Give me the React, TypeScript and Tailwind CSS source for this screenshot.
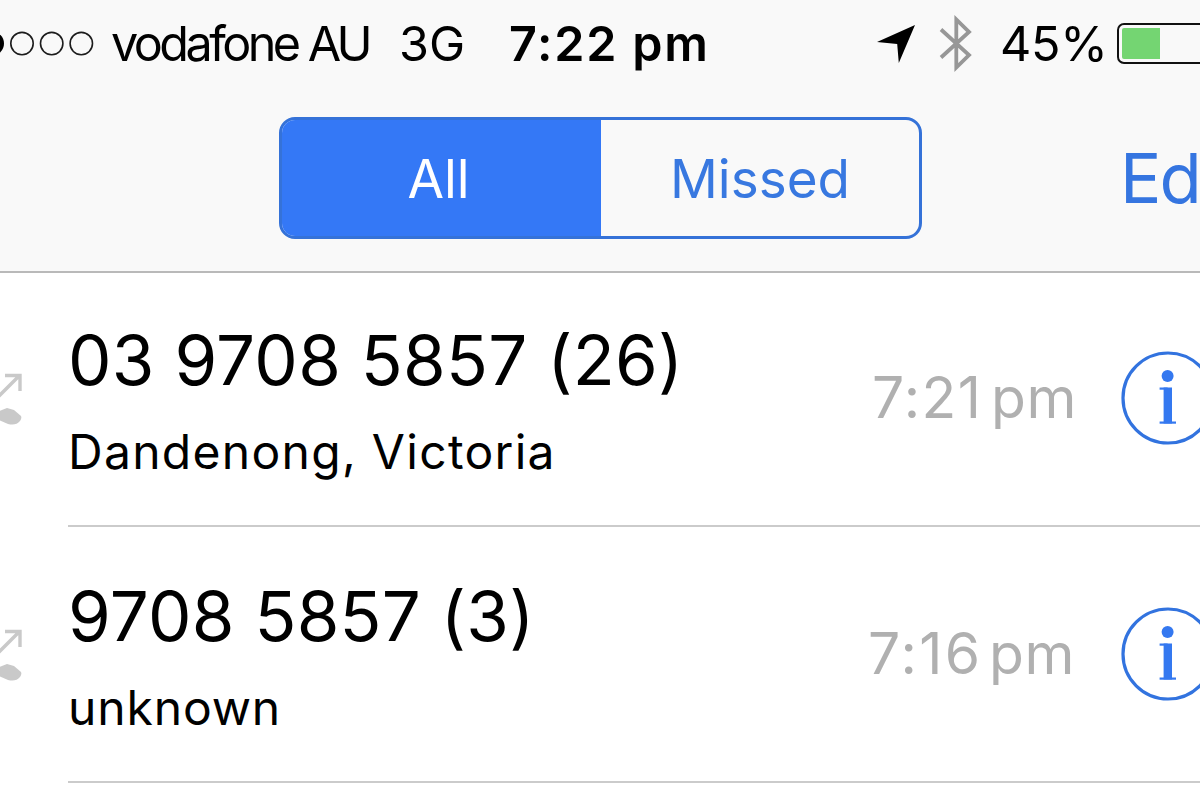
const calls = [
  {
    number: "03 9708 5857 (26)",
    place: "Dandenong, Victoria",
    time: "7:21",
    height: "h-[254px]",
    placeStyle: "tracking-[0.027em]",
    timeStyle: "ml-[4px] w-[119px] tracking-[0.025em]",
  },
  {
    number: "9708 5857 (3)",
    place: "unknown",
    time: "7:16",
    height: "h-[256px]",
    placeStyle: "tracking-[0.018em]",
    timeStyle: "w-[121px] tracking-[0.04em]",
  },
];

const SignalDots = () => (
  <svg width="94" height="26" viewBox="0 0 94 26" className="shrink-0">
    <circle cx="-8" cy="12.6" r="12" fill="#000" />
    {[22, 51.7, 81.3].map((cx) => (
      <circle key={cx} cx={cx} cy="12.6" r="11.2" fill="none" stroke="#1c1c1c" strokeWidth="1.6" />
    ))}
  </svg>
);

const LocationArrow = () => (
  <svg width="38" height="38" viewBox="0 0 38 38" className="shrink-0">
    <path d="M0 17 L38 0 L21.8 38 L20.2 19 Z" fill="#000" />
  </svg>
);

const BluetoothIcon = () => (
  <svg width="34" height="58" viewBox="0 0 34 58" className="shrink-0">
    <path
      d="M2 14.5 L30 40 L17.3 52.5 V4.5 L30 17 L2 42.5"
      fill="none"
      stroke="#979797"
      strokeWidth="3.8"
    />
  </svg>
);

const OutgoingCallIcon = () => (
  <svg width="24" height="56" viewBox="0 0 24 56" className="shrink-0">
    <path d="M-2 27 L19 6 M5 5.5 H20 V21" fill="none" stroke="#c9c9c9" strokeWidth="3.4" />
    <path d="M-1 41 L7 38 L14 40 L21 46 Q22 48 20 51 Q16 56 8 54 L-1 50 Z" fill="#c9c9c9" />
  </svg>
);

const InfoIcon = () => (
  <svg width="94" height="94" viewBox="0 0 94 94" className="shrink-0">
    <circle cx="47" cy="47" r="45" fill="none" stroke="#3273df" strokeWidth="3.2" />
    <circle cx="46.6" cy="25" r="6" fill="#3478f0" />
    <rect x="42.6" y="36.5" width="8.4" height="36" fill="#3478f0" />
    <rect x="38.6" y="36.5" width="8" height="2.2" fill="#3478f0" />
    <rect x="38.6" y="70.5" width="16.4" height="2.2" fill="#3478f0" />
  </svg>
);

const App = () => {
  return (
    <div className="w-[1200px] h-[800px] overflow-hidden bg-white text-black font-['Inter',sans-serif] whitespace-nowrap">
      <header className="h-[273px] bg-[#f9f9f9] border-b-2 border-[#b9b9b9]">
        {/* Status bar */}
        <div className="flex items-center h-[87px] text-[48.5px] leading-[87px]">
          <SignalDots />
          <span className="shrink-0 w-[287px] pl-[17px] tracking-[-0.073em]">vodafone AU</span>
          <span className="shrink-0 w-[128px] pl-[18px]">3G</span>
          <span className="shrink-0 w-[368px] tracking-[0.036em] font-semibold">7:22 pm</span>
          <LocationArrow />
          <div className="shrink-0 ml-[24px]">
            <BluetoothIcon />
          </div>
          <span className="shrink-0 w-[117px] ml-[27px] tracking-[-0.005em]">45%</span>
          <div className="shrink-0 w-[120px] h-[41px] p-[3px] rounded-[7px] border-2 border-[#111]">
            <div className="w-[38px] h-full rounded-l-[2px] bg-[#74d572]" />
          </div>
        </div>

        {/* Tabs */}
        <nav className="flex pt-[30px] pl-[279px] leading-[118px]">
          <div className="flex shrink-0 w-[643px] h-[122px] rounded-[16px] border-[3px] border-[#3572d8] overflow-hidden text-[53px]">
            <button className="w-[319px] pr-[6px] bg-[#3478f6] text-white">All</button>
            <button className="flex-1 text-[#3878e0]">Missed</button>
          </div>
          <button className="ml-[198px] text-[69px] tracking-[-0.03em] text-[#3575e0]">Ed</button>
        </nav>
      </header>

      {/* Recent calls */}
      <main>
        {calls.map((c) => (
          <div key={c.number} className={`flex items-end ${c.height}`}>
            <div className="w-[68px] shrink-0 pb-[101px]">
              <OutgoingCallIcon />
            </div>
            <div className="flex items-end flex-1 border-b-2 border-[#cbcbcb]">
              <div className="flex-1 pb-[31px]">
                <h2 className="text-[69px] leading-[100px] tracking-[0.004em] [font-feature-settings:'calt'_0]">
                  {c.number}
                </h2>
                <p className={`text-[48px] leading-[84px] ${c.placeStyle}`}>{c.place}</p>
              </div>
              <div className="flex items-center shrink-0 w-[332px] h-[94px] mb-[80px]">
                <div className="flex w-[253px] shrink-0 text-[57px] leading-[94px] text-[#b0b0b0]">
                  <span className={c.timeStyle}>{c.time}</span>
                  <span className="tracking-[0.01em]">pm</span>
                </div>
                <InfoIcon />
              </div>
            </div>
          </div>
        ))}
      </main>
    </div>
  );
};

export default App;
